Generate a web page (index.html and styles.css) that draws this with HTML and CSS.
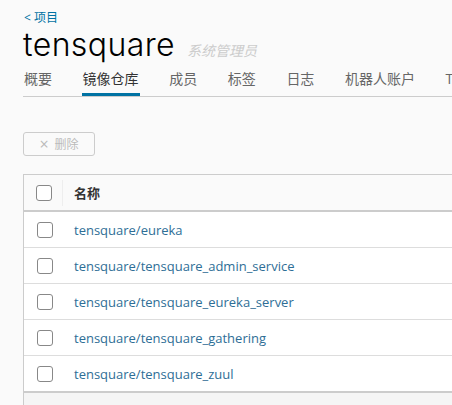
FILE: index.html
```html
<!DOCTYPE html>
<html>
<head>
<meta charset="utf-8">
<link rel="stylesheet" href="styles.css">
</head>
<body>
<div class="page">
  <a class="back" href="#">&lt; 项目</a>
  <div class="title-row">
    <h1 class="title">tensquare</h1>
    <span class="role">系统管理员</span>
  </div>
  <nav class="tabs">
    <span class="tab">概要</span>
    <span class="tab active">镜像仓库</span>
    <span class="tab">成员</span>
    <span class="tab">标签</span>
    <span class="tab">日志</span>
    <span class="tab">机器人账户</span>
    <span class="tab">T</span>
  </nav>
  <div class="toolbar">
    <button class="btn"><span class="x">×</span>删除</button>
  </div>
  <div class="grid">
    <div class="row head">
      <div class="cell chk"><span class="box"></span></div>
      <div class="cell name">名称</div>
    </div>
    <div class="row"><div class="cell chk"><span class="box"></span></div><div class="cell name"><a href="#">tensquare/eureka</a></div></div>
    <div class="row"><div class="cell chk"><span class="box"></span></div><div class="cell name"><a href="#">tensquare/tensquare_admin_service</a></div></div>
    <div class="row"><div class="cell chk"><span class="box"></span></div><div class="cell name"><a href="#">tensquare/tensquare_eureka_server</a></div></div>
    <div class="row"><div class="cell chk"><span class="box"></span></div><div class="cell name"><a href="#">tensquare/tensquare_gathering</a></div></div>
    <div class="row last"><div class="cell chk"><span class="box"></span></div><div class="cell name"><a href="#">tensquare/tensquare_zuul</a></div></div>
    <div class="foot"></div>
  </div>
</div>
</body>
</html>
```
FILE: styles.css
```css
html, body {
  margin: 0;
  padding: 0;
  background: #fafafa;
  overflow: hidden;
}
body {
  font-family: "Open Sans", "Noto Sans CJK SC", sans-serif;
  color: #333;
}
.page {
  padding: 10px 0 0 23px;
  width: 460px;
}
.back {
  display: block;
  font-size: 12px;
  line-height: 16px;
  color: #0072a3;
  text-decoration: none;
  margin-left: 1px;
}
.title-row {
  display: flex;
  align-items: baseline;
  height: 37px;
}
.title {
  margin: 0;
  font-family: "Inter", sans-serif;
  font-weight: 300;
  font-size: 32px;
  line-height: 37px;
  color: #000;
  letter-spacing: 0.4px;
}
.role {
  margin-left: 12px;
  font-size: 14px;
  font-style: italic;
  color: #ccc;
}
.tabs {
  display: flex;
  gap: 28.6px;
  margin-top: 4px;
  border-bottom: 1px solid #ccc;
  height: 30px;
  box-sizing: border-box;
}
.tab {
  font-size: 14px;
  line-height: 24px;
  color: #666;
  padding: 0 1px;
  white-space: nowrap;
}
.tab.active {
  color: #333;
  border-bottom: 3px solid #0072a3;
  height: 26px;
}
.toolbar {
  padding-top: 35px;
  height: 24px;
}
.btn {
  width: 72px;
  height: 24px;
  border: 1px solid #ccc;
  border-radius: 3px;
  background: transparent;
  color: #bbb;
  font-family: "Open Sans", "Noto Sans CJK SC", sans-serif;
  font-size: 12px;
  padding: 0;
  display: flex;
  align-items: center;
  justify-content: center;
  gap: 6px;
}
.x {
  font-size: 16px;
  line-height: 16px;
}
.grid {
  margin-top: 18px;
  border: 1px solid #ccc;
  border-right: none;
  background: #fff;
}
.row {
  display: flex;
  height: 36px;
  border-bottom: 1px solid #ddd;
  box-sizing: border-box;
  align-items: center;
}
.row.head {
  background: #fafafa;
  border-bottom: 2px solid #ccc;
  height: 37px;
}
.row.last {
  border-bottom: 2px solid #ccc;
  height: 37px;
}
.cell.chk {
  width: 39px;
  height: 100%;
  display: flex;
  align-items: center;
  justify-content: center;
  box-sizing: border-box;
  padding-left: 2px;
}
.head .cell.chk {
  border-right: 1px solid #eee;
  height: 26px;
}
.box {
  width: 14px;
  height: 14px;
  border: 1px solid #888;
  border-radius: 3px;
  background: #fff;
}
.cell.name {
  padding-left: 11px;
  font-size: 13px;
}
.head .cell.name {
  font-weight: 600;
  font-size: 13px;
  color: #333;
}
.cell.name a {
  color: #2e6e96;
  text-decoration: none;
}
.foot {
  height: 20px;
  background: #f5f5f5;
}
```
